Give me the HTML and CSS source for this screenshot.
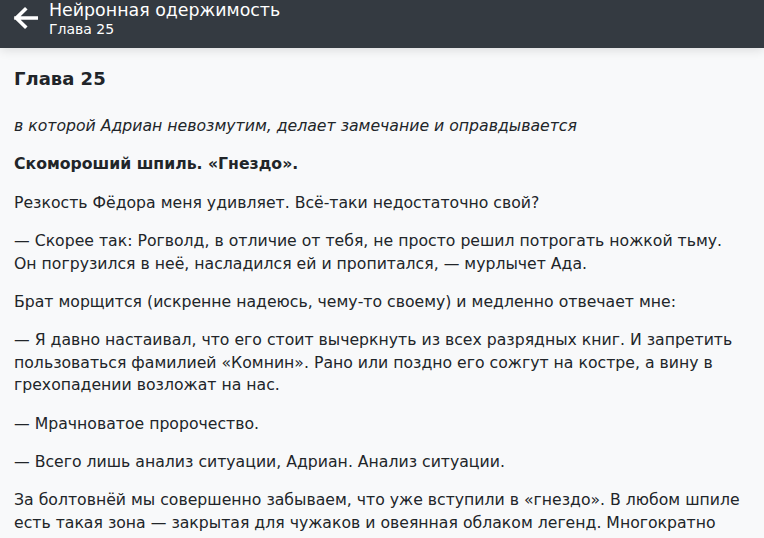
FILE: index.html
```html
<!DOCTYPE html>
<html lang="ru">
<head>
<meta charset="utf-8">
<title>Нейронная одержимость — Глава 25</title>
<link rel="stylesheet" href="styles.css">
</head>
<body>
<header class="topbar">
  <button class="back" aria-label="Назад">
    <svg width="26" height="24" viewBox="0 0 26 24"><path d="M24.5 12H4M13 3.5L4.3 12l8.7 8.5" fill="none" stroke="#fff" stroke-width="3.6" stroke-linecap="square"/></svg>
  </button>
  <div class="titles">
    <div class="title">Нейронная одержимость</div>
    <div class="subtitle">Глава 25</div>
  </div>
</header>
<main class="content">
  <h1 class="chapter">Глава 25</h1>
  <p class="epigraph">в которой Адриан невозмутим, делает замечание и оправдывается</p>
  <p class="section"><strong>Скомороший шпиль. «Гнездо».</strong></p>
  <p>Резкость Фёдора меня удивляет. Всё-таки недостаточно свой?</p>
  <p>— Скорее так: Рогволд, в отличие от тебя, не просто решил потрогать ножкой тьму. Он погрузился в неё, насладился ей и пропитался, — мурлычет Ада.</p>
  <p>Брат морщится (искренне надеюсь, чему-то своему) и медленно отвечает мне:</p>
  <p>— Я давно настаивал, что его стоит вычеркнуть из всех разрядных книг. И запретить пользоваться фамилией «Комнин». Рано или поздно его сожгут на костре, а вину в грехопадении возложат на нас.</p>
  <p>— Мрачноватое пророчество.</p>
  <p>— Всего лишь анализ ситуации, Адриан. Анализ ситуации.</p>
  <p>За болтовнёй мы совершенно забываем, что уже вступили в «гнездо». В любом шпиле есть такая зона — закрытая для чужаков и овеянная облаком легенд. Многократно перестроенная и перекроенная, она хранит тайны рода.</p>
</main>
</body>
</html>
```
FILE: styles.css
```css
html, body {
  margin: 0;
  padding: 0;
}
body {
  background: #f8f9fa;
  color: #212529;
  font-family: "DejaVu Sans", Verdana, sans-serif;
  overflow: hidden;
  height: 538px;
}
.topbar {
  height: 48px;
  background: #343a41;
  display: flex;
  align-items: flex-start;
  box-shadow: 0 2px 10px rgba(0, 0, 0, 0.12);
  position: relative;
}
.back {
  background: none;
  border: 0;
  padding: 0;
  margin: 6px 11px 0 12px;
  width: 26px;
  height: 24px;
  display: flex;
}
.titles {
  color: #fff;
}
.title {
  font-size: 17.4px;
  line-height: 20px;
}
.subtitle {
  font-size: 14px;
  line-height: 19px;
}
.content {
  padding: 19px 18px 0 14px;
  font-size: 15.7px;
  line-height: 22.4px;
}
.chapter {
  font-size: 18px;
  line-height: 24px;
  margin: 0 0 24px;
  font-weight: bold;
}
.content p {
  margin: 0 0 16px;
}
.epigraph {
  font-style: italic;
}
```
